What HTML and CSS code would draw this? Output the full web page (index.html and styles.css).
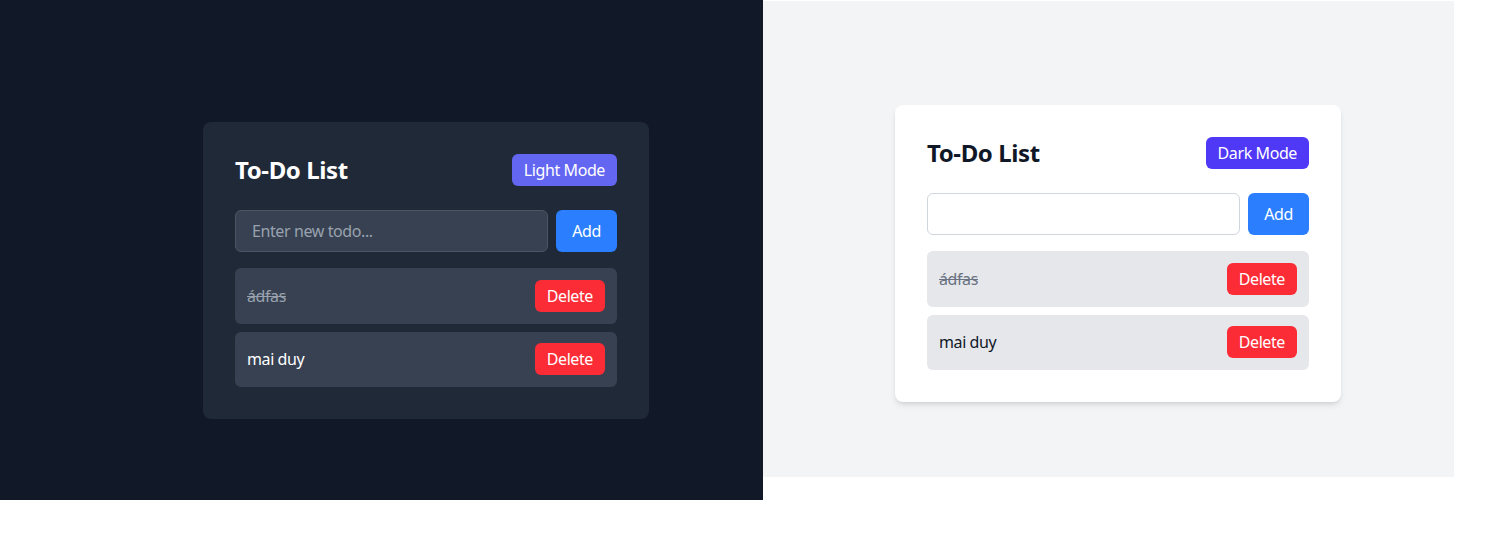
FILE: index.html
```html
<!DOCTYPE html>
<html lang="en">
<head>
<meta charset="utf-8">
<title>To-Do List</title>
<link rel="stylesheet" href="styles.css">
</head>
<body>
<div class="page">
  <section class="panel panel-dark">
    <div class="card card-dark">
      <div class="header">
        <h1 class="title">To-Do List</h1>
        <button class="mode-btn mode-light">Light Mode</button>
      </div>
      <div class="add-row">
        <input class="todo-input input-dark" type="text" placeholder="Enter new todo...">
        <button class="add-btn">Add</button>
      </div>
      <ul class="list">
        <li class="item item-dark"><span class="item-text done done-dark">ádfas</span><button class="del-btn">Delete</button></li>
        <li class="item item-dark"><span class="item-text">mai duy</span><button class="del-btn">Delete</button></li>
      </ul>
    </div>
  </section>
  <section class="panel panel-light">
    <div class="card card-light">
      <div class="header">
        <h1 class="title">To-Do List</h1>
        <button class="mode-btn mode-dark">Dark Mode</button>
      </div>
      <div class="add-row">
        <input class="todo-input input-light" type="text">
        <button class="add-btn">Add</button>
      </div>
      <ul class="list">
        <li class="item item-light"><span class="item-text done done-light">ádfas</span><button class="del-btn">Delete</button></li>
        <li class="item item-light"><span class="item-text">mai duy</span><button class="del-btn">Delete</button></li>
      </ul>
    </div>
  </section>
</div>
</body>
</html>
```

FILE: styles.css
```css
* { box-sizing: border-box; }
html, body { margin: 0; padding: 0; background: #ffffff; }
body {
  font-family: "Noto Sans", "Open Sans", sans-serif;
  font-size: 16px;
  line-height: 24px;
  letter-spacing: -0.4px;
}
.page {
  display: flex;
  align-items: flex-start;
}
.panel { flex: none; }
.panel-dark {
  width: 763px;
  height: 500px;
  background: #111827;
  padding: 122px 0 0 203px;
}
.panel-light {
  width: 691px;
  height: 476px;
  margin-top: 1px;
  background: #f3f4f6;
  padding: 104px 0 0 132px;
}
.card {
  width: 446px;
  padding: 32px;
  border-radius: 8px;
}
.card-dark { background: #1f2937; color: #ffffff; }
.card-light {
  background: #ffffff;
  color: #101828;
  box-shadow: 0 4px 6px -1px rgba(0,0,0,0.1), 0 2px 4px -2px rgba(0,0,0,0.1);
}
.header {
  display: flex;
  justify-content: space-between;
  align-items: center;
  margin-bottom: 24px;
}
.title {
  margin: 0;
  font-size: 24px;
  line-height: 32px;
  font-weight: 700;
}
button {
  font-family: inherit;
  font-size: 16px;
  line-height: 24px;
  letter-spacing: -0.4px;
  border: 0;
  color: #ffffff;
  cursor: pointer;
}
.mode-btn {
  padding: 4px 12px;
  border-radius: 6px;
}
.mode-light { background: #6366f1; }
.mode-dark { background: #4f39f6; }
.add-row {
  display: flex;
  gap: 8px;
  margin-bottom: 16px;
}
.todo-input {
  flex: 1;
  min-width: 0;
  height: 42px;
  padding: 8px 16px;
  border-radius: 6px;
  font-family: inherit;
  font-size: 16px;
  letter-spacing: -0.4px;
  outline: none;
}
.input-dark {
  background: #374151;
  border: 1px solid #4b5563;
  color: #ffffff;
}
.input-dark::placeholder { color: #99a1af; }
.input-light {
  background: #ffffff;
  border: 1px solid #d1d5dc;
  color: #101828;
}
.add-btn {
  padding: 9px 16px;
  border-radius: 6px;
  background: #2b7fff;
}
.list {
  list-style: none;
  margin: 0;
  padding: 0;
  display: flex;
  flex-direction: column;
  gap: 8px;
}
.item {
  display: flex;
  justify-content: space-between;
  align-items: center;
  padding: 12px;
  height: 55.5px;
  border-radius: 6px;
}
.item-dark { background: #374151; color: #ffffff; }
.item-light { background: #e5e7eb; color: #101828; }
.done { text-decoration: line-through; }
.done-dark { color: #99a1af; }
.done-light { color: #6a7282; }
.del-btn {
  padding: 4px 12px;
  border-radius: 6px;
  background: #fb2c36;
}
```
